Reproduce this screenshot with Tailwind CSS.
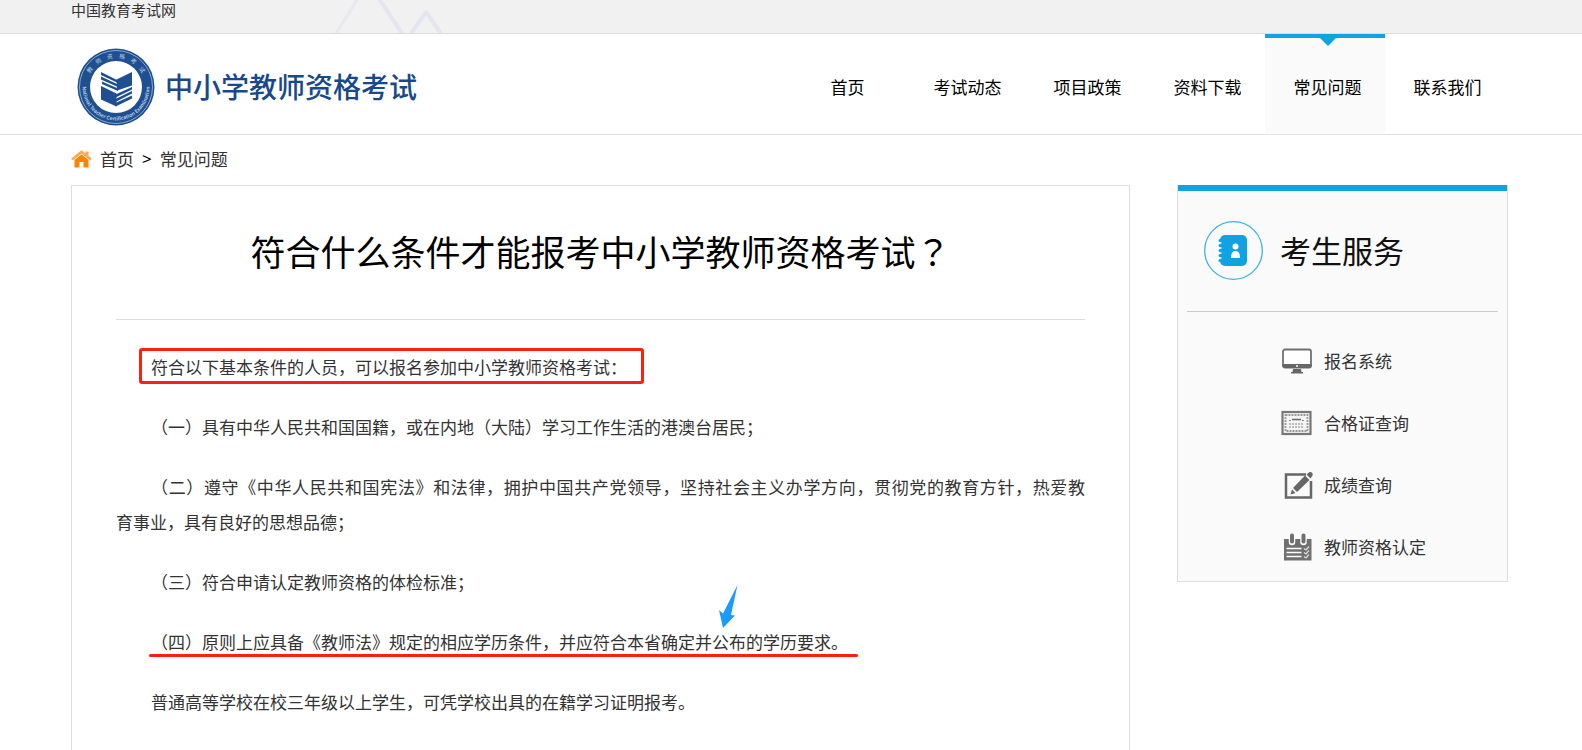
<!DOCTYPE html>
<html lang="zh-CN">
<head>
    <meta charset="UTF-8">
    <meta name="viewport" content="width=device-width, initial-scale=1.0">
    <title>常见问题 - 中小学教师资格考试</title>
    <script src="https://cdn.jsdelivr.net/npm/@tailwindcss/browser@4"></script>
</head>
<body class="flex flex-col min-h-screen bg-white text-[17px] text-[#333] font-['Noto_Sans_CJK_SC','Noto_Sans',sans-serif]">

<!-- 顶部条 -->
<div class="relative h-[34px] pl-[71px] bg-[#f1f1f1] border-b border-[#ddd] overflow-hidden">
    <svg class="absolute left-[330px] top-0" width="120" height="33" viewBox="0 0 120 33" fill="none" stroke="#e4e5ee" stroke-width="4" stroke-linejoin="round">
        <path d="M5 35L29 -3" stroke="#e8e8ee" stroke-width="3"/>
        <path d="M48 -3L73 35M80 35L96 12L112 35"/>
    </svg>
    <a href="#" class="relative block text-[15px] leading-[20px]">中国教育考试网</a>
</div>

<!-- 头部导航 -->
<header class="flex justify-between h-[101px] pl-[77px] pr-[77px] border-b border-[#e1e1e1]">
    <a href="#" class="flex items-center gap-[10px] pt-[7px] pb-[2px]">
        <svg width="78" height="78" viewBox="0 0 78 78">
            <circle cx="39" cy="39" r="38.5" fill="#1d4f91"/>
            <circle cx="39" cy="39" r="36.5" fill="none" stroke="#a9bedb" stroke-width="0.8"/>
            <circle cx="39" cy="39" r="26" fill="#fff"/>
            <defs>
                <path id="arcTop" d="M10 39A29 29 0 0 1 68 39"/>
                <path id="arcBottom" d="M5.5 39A33.5 33.5 0 0 0 72.5 39"/>
            </defs>
            <text font-size="6" fill="#b9cbe2"><textPath href="#arcTop" startOffset="50%" text-anchor="middle">教 &#160; &#160;师 &#160; &#160;资 &#160; &#160;格 &#160; &#160;考 &#160; &#160;试</textPath></text>
            <text font-size="5" font-weight="bold" fill="#b9cbe2"><textPath href="#arcBottom" startOffset="50%" text-anchor="middle">National Teacher Certification Examination</textPath></text>
            <g fill="#1d4f91">
                <path d="M39.5 31.5L55 24V37.5L40 42.500Z"/>
                <path d="M24 24L41 32.5V35L24 27Z"/>
                <path d="M24 28.5L41 36.5V39L24 31.5Z"/>
                <path d="M25 33.5L41 40.5V43L25 36Z"/>
                <path d="M24 38L39.5 45.5V58.5L24 51.5Z"/>
                <path d="M38.5 46.5L55 39V41.5L38.5 49.5Z"/>
                <path d="M38.5 51L55 43V45.5L38.5 54Z"/>
                <path d="M38.5 55L55 47.5V50.5L38.5 58.5Z"/>
            </g>
        </svg>
        <span class="pb-[2px] text-[28px] leading-[40px] font-medium text-[#17498b]">中小学教师资格考试</span>
    </a>
    <nav class="flex h-[99px] text-center leading-[106px] text-black">
        <a href="#" class="w-[120px] pl-[5px]">首页</a>
        <a href="#" class="w-[120px] pl-[5px]">考试动态</a>
        <a href="#" class="w-[120px] pl-[5px]">项目政策</a>
        <a href="#" class="w-[120px] pl-[5px]">资料下载</a>
        <a href="#" class="relative w-[120px] pl-[5px] bg-[#fafafa]">
            <span class="absolute inset-x-0 top-0 h-1 bg-[#10a2e3]"></span>
            <svg class="absolute left-[55px] top-1" width="16" height="8" viewBox="0 0 16 8"><path d="M0 0H16L8 8Z" fill="#10a2e3"/></svg>
            常见问题
        </a>
        <a href="#" class="w-[120px] pl-[5px]">联系我们</a>
    </nav>
</header>

<div class="flex flex-col flex-1 pl-[71px] pr-[74px]">
    <!-- 面包屑 -->
    <div class="flex items-center h-[50px] pb-[2px] gap-2">
        <svg width="21" height="18" viewBox="0 0 21 18">
            <path d="M1 9.5L10.5 2L20 9.5" fill="none" stroke="#ffa751" stroke-width="2.6"/>
            <path d="M14.5 1.5H17.5V6L14.5 4Z" fill="#ffa751"/>
            <path d="M3.5 10L10.5 4.5L17.5 10V17.5H12.5V12H8.5V17.5H3.5Z" fill="#ff8300"/>
        </svg>
        <a href="#">首页</a>
        <span class="font-['Noto_Sans',sans-serif] text-black">&gt;</span>
        <a href="#">常见问题</a>
    </div>

    <div class="flex flex-1 items-start gap-[47px]">
        <!-- 正文 -->
        <main class="flex-1 self-stretch px-11 border border-b-0 border-[#ddd]">
            <h1 class="h-[134px] border-b border-[#ddd] text-center text-[35px] leading-[130px] text-black">符合什么条件才能报考中小学教师资格考试<span class="font-['Noto_Sans_CJK_TC',sans-serif]" lang="zh-TW">？</span></h1>
            <div class="flex flex-col gap-[25px] pt-[29px] leading-[35px] indent-[35px] text-justify">
                <p class="relative">
                    <span class="absolute left-[23px] -top-px w-[505px] h-[36px] border-3 border-[#ff1f10] rounded-[3px]"></span>
                    符合以下基本条件的人员，可以报名参加中小学教师资格考试：
                </p>
                <p>（一）具有中华人民共和国国籍，或在内地（大陆）学习工作生活的港澳台居民；</p>
                <p>（二）遵守《中华人民共和国宪法》和法律，拥护中国共产党领导，坚持社会主义办学方向，贯彻党的教育方针，热爱教<span class="whitespace-nowrap">育事业</span>，具有良好的思想品德；</p>
                <p>（三）符合申请认定教师资格的体检标准；</p>
                <p class="relative">
                    （四）原则上应具备《教师法》规定的相应学历条件，并应符合本省确定并公布的学历要求。
                    <span class="absolute left-[33px] bottom-[2px] w-[709px] h-[3px] bg-[#ff1f10] rounded-full"></span>
                    <svg class="absolute left-[602px] -top-[39px]" width="20" height="43" viewBox="0 0 20 43"><path d="M19.5 0L13 30L17 30.5L5 43L1 25L5 28.5Z" fill="#1c9bff"/></svg>
                </p>
                <p>普通高等学校在校三年级以上学生，可凭学校出具的在籍学习证明报考。</p>
            </div>
        </main>

        <!-- 考生服务 -->
        <aside class="w-[331px] shrink-0 bg-[#fafafa] border-x border-b border-[#ddd]">
            <div class="h-[6px] bg-[#10a2e3]"></div>
            <div class="flex items-center gap-[17px] h-[121px] mx-[9px] pl-[17px] pb-[2px] border-b border-[#ccc]">
                <svg width="59" height="59" viewBox="0 0 59 59">
                    <circle cx="29.5" cy="29.5" r="28.8" fill="none" stroke="#3bb2e8" stroke-width="1.3"/>
                    <rect x="16" y="14" width="27" height="31" rx="5" fill="#10a2e3"/>
                    <path d="M16 19.5H19M16 24.5H19M16 29.5H19M16 34.5H19M16 39.5H19" stroke="#10a2e3" stroke-width="3" stroke-linecap="round"/>
                    <path d="M14 22H17.5M14 27H17.5M14 32H17.5M14 37H17.5" stroke="#fafafa" stroke-width="1.6"/>
                    <circle cx="31.5" cy="25.5" r="3" fill="#fff"/>
                    <path d="M27 37C27 32 28.500 30 31.5 30S36 32 36 37Z" fill="#fff"/>
                </svg>
                <h2 class="text-[31px] leading-[46px] text-[#111]">考生服务</h2>
            </div>
            <ul class="pt-[18px] pb-[3px] pl-[103px]">
                <li>
                    <a href="#" class="flex items-center gap-[11px] h-[62px]">
                        <svg width="32" height="26" viewBox="0 0 32 26">
                            <rect x="2" y="1.5" width="28" height="18" rx="2" fill="#fff" stroke="#707070" stroke-width="1.8"/>
                            <path d="M1.5 16H30.5V18A2 2 0 0 1 28.5 20H3.5A2 2 0 0 1 1.5 18Z" fill="#666"/>
                            <circle cx="16" cy="18" r="1" fill="#fff"/>
                            <path d="M12 21H20L20.5 24H22V25.5H10V24H11.5Z" fill="#666"/>
                        </svg>
                        报名系统
                    </a>
                </li>
                <li>
                    <a href="#" class="flex items-center gap-[11px] h-[62px]">
                        <svg width="32" height="26" viewBox="0 0 32 26">
                            <rect x="1.5" y="2" width="28" height="22" fill="#f4f4f4" stroke="#777" stroke-width="2.2"/>
                            <rect x="4.5" y="5" width="22" height="16" fill="none" stroke="#999" stroke-width="1.8" stroke-dasharray="2 1"/>
                            <path d="M11 9.5H20" stroke="#666" stroke-width="1.5"/>
                            <path d="M8 10.5H10M21 10.5H23M8 14H23M8 17H23" stroke="#888" stroke-dasharray="2 1"/>
                        </svg>
                        合格证查询
                    </a>
                </li>
                <li>
                    <a href="#" class="flex items-center gap-[11px] h-[62px]">
                        <svg width="32" height="28" viewBox="0 0 32 28">
                            <path d="M25 3.5H5V26.5H30V10" fill="none" stroke="#666" stroke-width="2.5"/>
                            <path d="M12 17L24 4.5L28.5 9L16 21Z" fill="#666"/>
                            <path d="M11 18.5L14.5 22L9.5 23.5Z" fill="#666"/>
                            <path d="M25.5 3.5L28 1.500C30 0 32.500 2.500 31.5 4.5L29.5 7.500Z" fill="#666"/>
                        </svg>
                        成绩查询
                    </a>
                </li>
                <li>
                    <a href="#" class="flex items-center gap-[11px] h-[62px]">
                        <svg width="32" height="28" viewBox="0 0 32 28">
                            <path d="M3 6H30.5V27.5H3Z" fill="#707070"/>
                            <path d="M11 2.5V9M22.5 2.5V9" stroke="#fafafa" stroke-width="6.5" stroke-linecap="round"/>
                            <path d="M11 2.5V8.5M22.5 2.5V8.5" stroke="#707070" stroke-width="4" stroke-linecap="round"/>
                            <path d="M5.5 15.5H20.5M5.5 19.5H20.5M5.5 23.5H20.5" stroke="#fff" stroke-width="1.4"/>
                            <path d="M23 15.5L25 17L28 13.5M23 19.5L25 21L28 17.5M23 23.5L25 25L28 21.5" fill="none" stroke="#ddd" stroke-width="1.2"/>
                        </svg>
                        教师资格认定
                    </a>
                </li>
            </ul>
        </aside>
    </div>
</div>
</body>
</html>
